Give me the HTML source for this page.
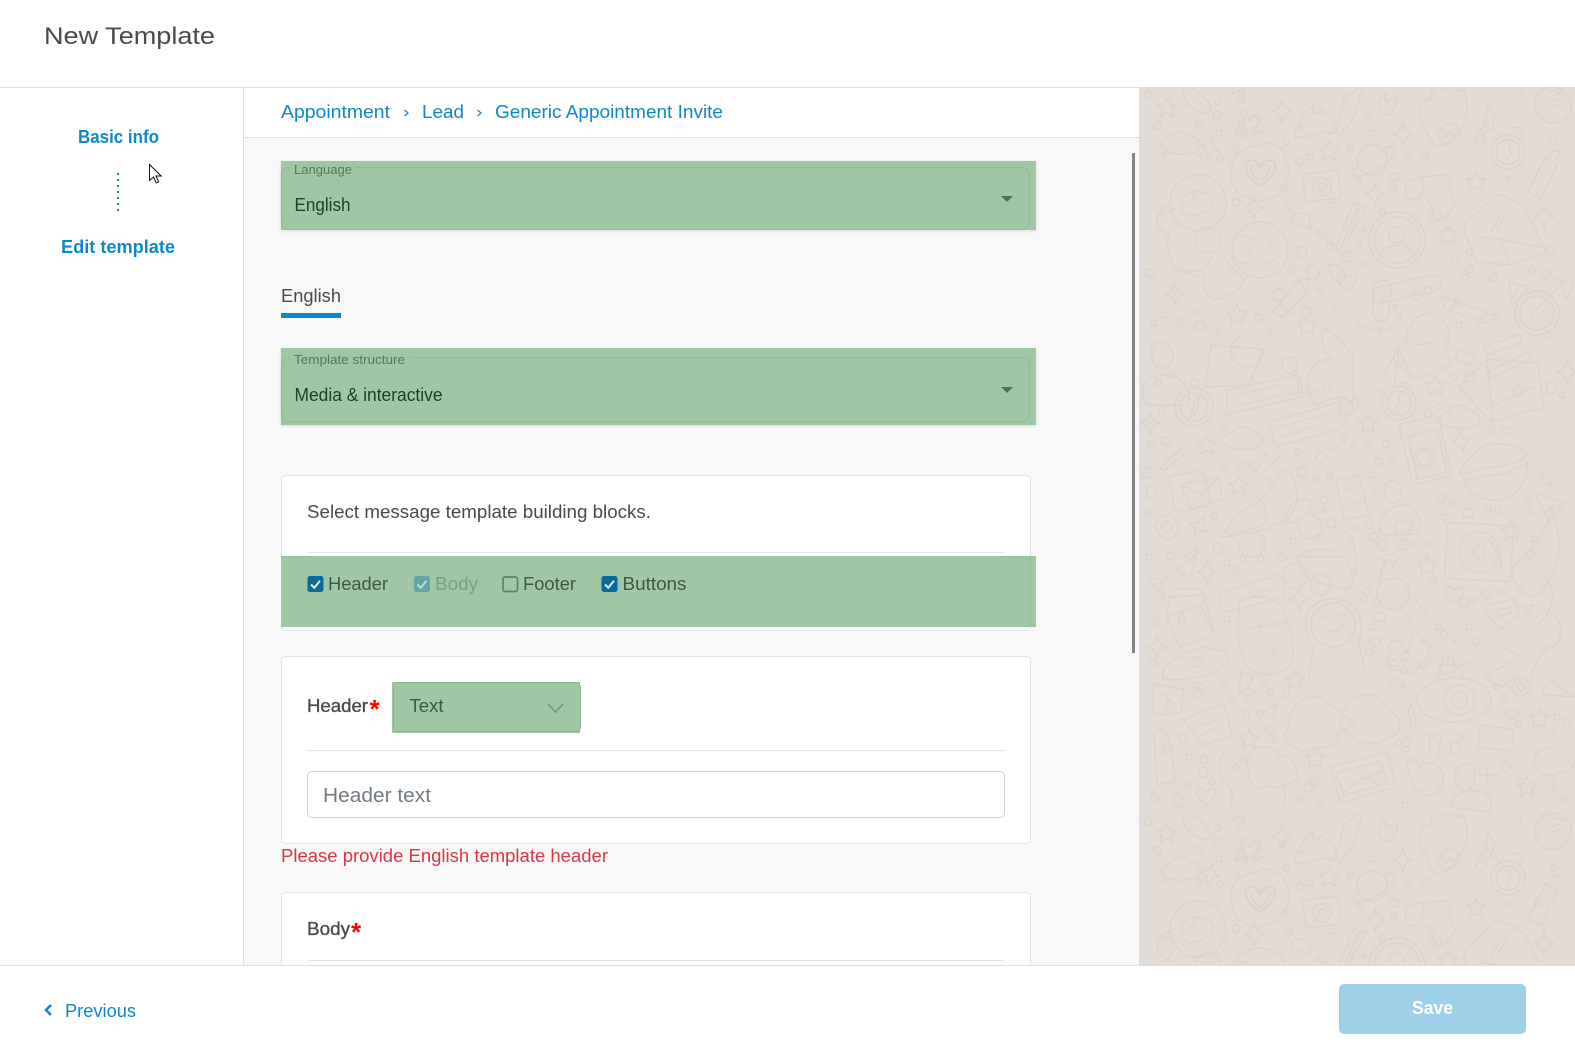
<!DOCTYPE html>
<html lang="en"><head><meta charset="utf-8"><title>New Template</title>
<style>
html,body{margin:0;padding:0;background:#fff;width:1575px;height:1052px;overflow:hidden;font-family:"Liberation Sans",sans-serif}
div{position:absolute;box-sizing:border-box}
#w{left:0;top:0;width:1575px;height:1052px;overflow:hidden}
.card{background:#fff;border:1px solid #e2e2e2;border-radius:5px;left:281px;width:750px}
.hr{background:#e2e2e2;height:1px;left:307px;width:698px}
.g{background:#a0c7a3;box-shadow:0 1px 3px rgba(0,0,0,.12)}
.ol{border:1px solid #93ba98;border-radius:8px}
svg{position:absolute;left:0;top:0}
.t{font-family:"Liberation Sans",sans-serif;font-size:18px;fill:#4a4a4a}
.b{fill:#0d88cb}.gt{fill:#3c5a43}.gd{fill:#1f4028}
.p{fill:none;stroke:#dbd4ce;stroke-width:1.4;stroke-linejoin:round;stroke-linecap:round}
</style></head><body>
<div id="w">
<div style="left:0;top:87px;width:1575px;height:1px;background:#e0e0e0"></div>
<div style="left:243px;top:88px;width:896px;height:877px;background:#f8f8f8;border-left:1px solid #e0e0e0"></div>
<div style="left:244px;top:88px;width:895px;height:50px;background:#fff;border-bottom:1px solid #e0e0e0"></div>
<div style="left:1139px;top:87px;width:436px;height:878px;background:#e3dcd6;overflow:hidden">
<svg width="436" height="878" viewBox="0 0 436 878">
<defs>
<clipPath id="c"><rect width="436" height="726"/></clipPath>
<path id="s" d="M0-10 3-3.5 10-3 5 1.5 6.5 9 0 5-6.5 9-5 1.5-10-3-3-3.5z"/>
<path id="k" d="M0-12Q1.5-2 10 0 1.5 2 0 12-1.5 2-10 0-1.5-2 0-12z"/>
<path id="h" d="M0 8C-12 0-10-8-5-8-2-8 0-5 0-4 0-5 3-8 6-8 11-8 12 0 0 8z"/>
<path id="l" d="M-17 8C-24 4-20-6-12-5-9-13 4-14 8-6 18-8 22 5 14 9 5 12-9 12-17 8z"/>
<g id="T" class="p" clip-path="url(#c)">
<use href="#s" x="28" y="21"/><use href="#k" x="71" y="61" transform="rotate(15 71 61)"/><use href="#l" x="43" y="56"/>
<path d="M45-5C55 2 70 12 72 22 70 30 60 26 50 18 44 12 42 2 45-5z"/>
<text x="94" y="48" font-family="Liberation Sans" font-size="28" transform="rotate(-14 114 40)">42</text>
<path d="M155 50C158 35 165 26 175 18 170 26 178 30 182 22L193 32C200 40 196 50 190 46 184 42 170 52 155 50zM197 45 205 12 225-4 214 32 200 50z"/>
<path d="M245 28C238 22 238 12 248 6 243 14 247 18 253 12 258 8 260 15 256 20L250 28z"/>
<use href="#s" x="190" y="64"/><use href="#s" x="99" y="-2"/><use href="#k" x="143" y="24"/><use href="#k" x="264" y="47"/>
<circle cx="233" cy="73" r="15"/><path d="M219 80C208 86 212 92 226 88 240 84 258 70 256 62 254 58 248 60 245 62"/>
<path d="M286 41C276 28 282 10 292 12 290 4 298 0 297 -5 303 4 310 6 310 -2 322 6 325 6 323 0 330 14 330 26 324 38 318 50 306 60 298 60 293 58 290 50 286 41z"/>
<path d="M299 42 C312 30 322 40 321 47 318 52 310 58 306 58 302 56 298 48 299 42zM302 42 307 51 311 44 315 50 319 41"/>
<use href="#h" transform="translate(121 86) scale(1.6)"/>
<use href="#h" transform="translate(121 86) scale(1)"/>
<path d="M121 58C128 52 134 60 140 60 146 62 146 70 148 74 152 82 150 90 147 96 144 104 140 108 134 110 126 114 116 115 106 110 98 108 95 100 93 94 90 86 92 78 96 70 102 62 110 60 121 58z"/>
<rect x="165" y="85" width="36" height="28" rx="3" transform="rotate(-7 183 100)"/><circle cx="183" cy="100" r="9"/><circle cx="183" cy="100" r="4"/>
<path d="M283 90 270 93C264 100 266 112 274 113 282 113 286 104 283 90zM283 90 305 88C312 88 314 94 308 96M310 100 316 118 306 132C296 136 290 124 294 118L286 112M300 124A6 6 0 1 0 301 125"/>
<circle cx="369" cy="65" r="17"/><circle cx="369" cy="65" r="12"/><path d="M369 56 372 66 368 72M355 44 362 50M372 42A6 4 0 0 1 382 47"/>
<path d="M390 103 407 70 418 78 402 112 392 108zM396 88C398 82 404 84 402 90 400 96 394 94 396 88zM412 66 418 62 422 68 417 72M349 20 345 40 341 42C344 46 350 46 353 40 356 34 358 30 349 20z"/>
<circle cx="414" cy="18" r="18"/><path d="M410 15 420 11M410 21 420 17M380 12 386-5 425 8 418 0"/>
<path d="M328 135 357 108C370 108 384 118 390 128L407 165 372 178 338 175 325 145zM340 150 360 152 372 178M360 152 402 160M360 130 352 145M367 126 358 142"/>
<use href="#k" x="405" y="130"/><use href="#s" x="309" y="148"/><use href="#s" x="337" y="95"/><use href="#k" x="236" y="107"/>
<circle cx="59" cy="116" r="28"/>
<path d="M44 112C50 102 70 102 74 112 76 124 66 126 58 128 48 132 40 126 44 112zM52 116 57 104M31 118C14 124 14 140 30 148M36 122 20 128M33 140C25 150 29 170 35 180 45 190 70 184 70 174L74 170M40 180C55 190 60 190 65 188 62 206 72 220 88 208 104 204 110 190 98 186L86 172"/>
<circle cx="69" cy="153" r="13"/><circle cx="69" cy="153" r="4"/>
<circle cx="121" cy="163" r="28"/><path d="M100 148 120 154M112 160 110 168M130 150 132 158M125 178 140 170M100 176 112 176"/>
<use href="#k" x="115" y="121"/>
<path d="M155 125 170 128 172 142 152 134zM180 143 197 160 215 115 220 117 200 165 177 146zM210 150 222 118 227 120 208 155"/>
<path d="M168 180C165 190 178 200 180 186 178 178 170 178 168 180zM190 178C192 190 198 200 205 192 210 180 194 176 190 178z"/>
<circle cx="258" cy="153" r="28"/><circle cx="258" cy="153" r="23"/><circle cx="258" cy="148" r="8"/><path d="M240 168C246 155 270 155 276 168"/>
<use href="#h" x="208" y="196"/>
<path d="M134 225 160 193 168 206 144 230zM140 218 154 228M160 193 170 192 168 206"/>
<use href="#k" x="36" y="207"/><use href="#s" x="98" y="228"/><use href="#s" x="168" y="238"/>
<path d="M234 202C236 190 252 190 252 202L250 226C246 238 236 238 234 226zM217 232C222 248 258 248 262 226M240 240 243 254"/>
<rect x="233" y="194" width="70" height="16" rx="8" transform="rotate(-13 268 202)"/>
<path d="M302 208 345 225 358 230 346 236 306 222zM345 224 340 238M318 208 312 224"/>
<path d="M370 195 390 200 373 218zM380 200 372 215"/>
<circle cx="398" cy="226" r="22"/><circle cx="398" cy="226" r="17"/><path d="M392 228 428 192M414 190 434 198 428 212 422 196"/>
<path d="M268 255C265 240 282 220 298 228 312 240 312 250 306 262 314 275 312 285 300 280 280 298 270 290 262 278 255 280 248 262 268 255zM276 258 292 256"/>
<path d="M345 260 378 248C384 248 384 256 376 258L348 268zM348 285 388 266C394 268 392 274 384 276L350 292zM320 262 336 268 330 278 316 272z"/>
<path d="M176 318 200 310C208 308 214 316 214 322L214 268C210 264 200 250 184 240 180 250 186 264 192 272 178 272 172 280 170 288 166 298 170 310 176 318z"/>
<path d="M245 285 260 262 272 290M260 262 255 300"/>
<path d="M72 258 66 300 110 298 124 262zM124 262A16 16 0 1 1 100 250"/><path d="M156 272A8 8 0 1 0 157 273M157 280 160 305M150 307 168 305"/>
<path d="M12 262C18 250 35 256 34 270 30 284 20 284 14 276zM4 300C6 288 30 284 40 292 52 300 52 312 48 318L8 318C4 312 2 306 4 300z"/>
<circle cx="55" cy="320" r="19"/><circle cx="55" cy="320" r="14"/><path d="M50 332 56 315 60 308 58 325zM55 300A4 4 0 1 1 56 300"/>
<path d="M88 303 158 288C162 288 164 300 162 310L98 325 86 330 88 322z"/><path d="M98 308 145 297M101 318 144 308"/>
<path d="M130 335 198 316 202 330 209 334 200 342 136 360zM140 340 190 326M142 350 175 340"/>
<circle cx="260" cy="316" r="17"/><circle cx="260" cy="316" r="12"/><path d="M259 307 261 318 254 322M240 305 246 300M262 296 272 298"/>
<path d="M320 300 348 272 399 276 405 320 352 335zM348 272 354 335M395 300 352 320M376 300A5 5 0 1 1 375 301"/>
<use href="#l" transform="translate(322 330)"/><use href="#l" x="105" y="351"/>
<use href="#s" x="296" y="299"/><use href="#s" x="229" y="336"/><use href="#s" x="67" y="358"/>
<use href="#k" x="11" y="336"/><use href="#k" x="322" y="354" transform="rotate(-15 322 354)"/><use href="#k" x="428" y="285"/>
<path d="M25 378 42 362 46 366 28 382C20 384 20 380 25 378zM28 372 42 362"/>
<rect x="268" y="332" width="40" height="62" rx="4" transform="rotate(-13 287 371)"/><rect x="274" y="346" width="30" height="44" transform="rotate(-13 287 371)"/>
<circle cx="285" cy="371" r="10"/><circle cx="285" cy="371" r="7"/>
<path d="M320 386C330 370 348 350 355 358 362 354 385 362 387 366 392 372 360 382 348 380 335 384 320 390 320 386zM324 392C335 396 345 386 358 388 368 386 386 380 388 374 390 395 378 412 358 413 340 414 328 404 324 392z"/>
<path d="M396 405 425 415 410 435zM415 418 407 425"/>
<path d="M29 390 60 383 66 390 72 418 45 424 36 422zM42 398 80 390 83 412 52 422zM42 398 62 408 80 390"/>
<use href="#s" x="100" y="399"/>
<path d="M84 450C90 430 110 420 125 410L145 382C160 388 165 420 145 435 120 445 105 448 84 450zM125 384 144 366M122 388 134 396M90 448C104 445 118 440 125 438 130 428 125 415 118 408M146 428C155 410 170 410 172 414 178 424 160 435 146 437zM160 435A12 12 0 1 0 172 428M100 455A13 13 0 1 0 122 448"/>
<path d="M197 394 220 388 230 428 206 433zM208 398C206 405 216 406 215 398M208 418 224 413"/>
<path d="M245 405C244 395 252 392 258 395 264 398 264 410 258 415 252 418 246 412 245 405zM242 448C238 430 250 418 265 418 280 420 285 436 278 447zM260 448C250 438 262 428 266 435 274 430 278 440 266 448z"/>
<rect x="307" y="437" width="66" height="56" rx="3" transform="rotate(3 340 466)"/><circle cx="340" cy="465" r="20"/><circle cx="340" cy="465" r="6"/><path d="M352 455 362 472V484"/>
<use href="#s" x="372" y="444"/>
<use href="#h" transform="translate(210 320)"/>
<circle cx="28" cy="440" r="5"/><path d="M21 430 28 427 35 430 40 440 35 450 28 453 21 450 16 440z"/>
<use href="#k" x="60" y="440" transform="rotate(25 60 440)"/><use href="#k" x="68" y="485"/><use href="#s" x="288" y="478"/><use href="#k" x="160" y="512"/>
<path d="M45 470 58 460 52 490 36 484 60 465"/><path d="M10 490 24 493 20 503 26 505 24 512 14 498z"/>
<path d="M158 470 205 470C213 478 215 490 212 500 205 505 178 496 165 488zM158 470C165 462 190 460 198 465M206 444C216 450 218 470 216 490"/>
<path d="M165 480A12 12 0 1 0 166 481M188 490A10 10 0 1 0 189 491"/>
<path d="M412 420C420 445 428 470 405 500 395 520 380 505 372 485 380 465 405 465 412 420z"/>
<path d="M240 495 245 475C250 470 255 475 254 482M265 495A16 16 0 1 0 266 496M275 510 288 528"/>
<path d="M240 470A5 5 0 1 1 240 482M250 468A5 5 0 1 1 252 476"/>
<path d="M82 505 140 488C145 490 146 502 144 510L88 525C80 525 80 510 82 505z"/>
<path d="M100 515C120 505 140 510 145 525 152 540 158 570 150 580 130 590 110 592 105 570 96 560 100 540 100 515z"/>
<path d="M115 510A10 10 0 0 1 130 505M122 535V545M105 542 150 535"/>
<path d="M30 510 65 508 75 548 40 560 28 530zM34 502 62 502 65 508M28 530 62 518 75 548M40 530C38 540 48 540 46 530L43 525z"/>
<circle cx="194" cy="538" r="22"/><path d="M172 555C160 530 170 513 194 512 220 514 225 530 220 555M184 540Q194 550 204 538M180 532Q184 526 188 532M200 530Q204 526 208 530M218 550 226 582M174 560 170 590"/>
<use href="#k" x="18" y="560"/>
<path d="M268 566 274 548C280 544 285 550 282 556 292 552 296 560 288 566 296 572 290 582 280 578 276 590 262 590 258 578 248 582 244 572 252 566 244 556 256 550 262 556zM268 566A4 4 0 1 0 269 567"/>
<path d="M346 520C362 515 370 512 376 512L380 527 362 542 350 530zM351 525 372 520M352 532 372 526M378 520 395 518 382 532"/>
<use href="#h" x="315" y="508"/>
<path d="M396 540C420 520 415 500 405 490M410 525C430 535 420 565 410 560 395 575 390 590 396 590"/>
<path d="M305 570 300 590M306 588 330 575M313 570 318 582M360 560 385 570M375 573 345 590 362 600 380 588"/>
<path d="M24 592C18 578 46 565 65 560 78 565 90 560 90 575 75 590 40 595 24 592z"/>
<path d="M15 597 45 602 42 625 28 628 15 625C12 615 14 605 15 597zM22 605 37 620M30 612 26 622"/>
<path d="M102 585 115 588 108 602 118 604 108 612 106 605 100 605z"/><use href="#s" x="156" y="593"/><path d="M124 625 138 616 134 630M124 625A3 3 0 1 1 123 624"/>
<path d="M44 632 85 617 93 648 64 658zM59 640 80 632M62 648 80 641"/>
<path d="M150 640C148 622 165 606 178 610 190 615 195 622 203 626 208 612 220 606 234 608 245 612 252 625 258 630 264 640 258 650 248 652 236 660 225 654 218 655L204 642C195 650 200 655 198 658 186 660 175 662 165 664 150 660 140 650 150 640zM203 640C196 630 212 625 210 635 214 628 222 632 208 642z"/>
<ellipse cx="315" cy="613" rx="37" ry="22" transform="rotate(-3 315 613)"/><circle cx="320" cy="613" r="15"/><circle cx="320" cy="613" r="8"/><path d="M298 590 300 578H320L325 592M308 578 310 568"/>
<path d="M272 615C276 625 275 630 277 635 278 640 270 640 272 632 268 625 270 622 272 615z"/>
<circle cx="382" cy="600" r="9"/><circle cx="382" cy="600" r="4"/><path d="M405 608C400 594 420 590 420 600 430 605 436 610 436 610M405 608 436 610"/><use href="#s" x="400" y="632"/>
<rect x="340" y="640" width="34" height="22" rx="3" transform="rotate(6 357 651)"/>
<use href="#s" x="110" y="652"/><use href="#h" x="67" y="710"/><use href="#s" x="176" y="672"/>
<path d="M15 646C22 638 30 645 33 665L36 695 18 698zM25 660C20 668 28 672 30 664z"/>
<path d="M86 662C76 680 84 695 88 698 95 700 95 720 88 726M110 685A14 14 0 0 1 140 668C155 672 160 680 158 692 150 700 135 702 130 698 120 705 110 698 110 685zM146 700 146 718"/>
<path d="M191 680 248 665 257 700 202 716zM197 686 242 674 248 696 205 708zM205 705 225 690 240 698M225 692 245 684"/>
<path d="M285 650C285 645 290 645 291 652V668M294 652C295 645 302 645 302 652L299 672M268 680C266 672 280 668 280 680 292 670 305 680 304 692 300 710 290 712 282 704 276 704 272 690 268 680z"/>
<path d="M316 690C316 678 330 672 334 680 340 692 332 705 325 705 320 703 318 698 316 690zM312 720C310 708 330 700 345 705 355 712 353 720 350 725z"/>
<path d="M348 680V695M340 688H358"/><use href="#s" x="388" y="700"/>
<path d="M415 660C405 660 395 665 395 675 395 690 415 690 420 685 430 685 436 680 436 672M415 640V650M415 690V700"/>
<path d="M14 705C10 712 14 718 18 715 22 712 16 708 14 705zM38 706C32 715 36 722 43 720 45 712 40 708 38 706z"/>
<g>
<circle cx="9" cy="8" r="4"/><circle cx="79" cy="15" r="3"/><circle cx="102" cy="12" r="3"/><circle cx="105" cy="27" r="3"/><circle cx="78" cy="28" r="4"/><circle cx="60" cy="36" r="3"/><circle cx="18" cy="38" r="4"/><circle cx="80" cy="46" r="3"/><circle cx="144" cy="32" r="3"/><circle cx="147" cy="55" r="3"/><circle cx="162" cy="40" r="2"/><circle cx="229" cy="27" r="3"/><circle cx="233" cy="46" r="3"/><circle cx="346" cy="37" r="3"/><circle cx="342" cy="52" r="5"/><circle cx="414" cy="55" r="3"/><circle cx="25" cy="68" r="2"/><circle cx="61" cy="68" r="2"/><circle cx="81" cy="71" r="3"/><circle cx="98" cy="63" r="3"/><circle cx="161" cy="74" r="4"/><circle cx="171" cy="70" r="3"/><circle cx="212" cy="62" r="3"/><circle cx="269" cy="70" r="3"/><circle cx="286" cy="68" r="3"/><circle cx="256" cy="90" r="4"/><circle cx="254" cy="102" r="3"/><circle cx="220" cy="93" r="2"/><circle cx="369" cy="92" r="2"/><circle cx="97" cy="115" r="4"/><circle cx="150" cy="120" r="3"/><circle cx="145" cy="100" r="3"/><circle cx="193" cy="118" r="3"/><circle cx="243" cy="125" r="3"/><circle cx="225" cy="143" r="2"/><circle cx="220" cy="157" r="2"/><circle cx="191" cy="160" r="3"/><circle cx="163" cy="165" r="5"/><circle cx="330" cy="165" r="3"/><circle cx="316" cy="175" r="3"/><circle cx="411" cy="164" r="5"/><circle cx="208" cy="170" r="5"/><circle cx="225" cy="178" r="2"/><circle cx="152" cy="183" r="3"/><circle cx="10" cy="186" r="4"/><circle cx="330" cy="182" r="4"/><circle cx="326" cy="190" r="3"/><circle cx="354" cy="190" r="4"/><circle cx="393" cy="183" r="3"/><circle cx="407" cy="188" r="4"/><circle cx="35" cy="202" r="3"/><circle cx="139" cy="208" r="6"/><circle cx="180" cy="203" r="2"/><circle cx="246" cy="211" r="3"/><circle cx="256" cy="220" r="2"/><circle cx="278" cy="208" r="5"/><circle cx="289" cy="204" r="4"/><circle cx="167" cy="225" r="5"/><circle cx="197" cy="218" r="2"/><circle cx="25" cy="228" r="3"/><circle cx="58" cy="225" r="2"/><circle cx="120" cy="231" r="4"/><circle cx="320" cy="217" r="3"/><circle cx="357" cy="224" r="4"/><circle cx="15" cy="236" r="3"/><circle cx="40" cy="235" r="3"/><circle cx="61" cy="238" r="5"/><circle cx="80" cy="245" r="3"/><circle cx="130" cy="245" r="3"/><circle cx="320" cy="238" r="3"/><circle cx="380" cy="233" r="3"/><circle cx="410" cy="248" r="3"/><circle cx="19" cy="295" r="3"/><circle cx="32" cy="288" r="3"/><circle cx="23" cy="323" r="3"/><circle cx="10" cy="333" r="3"/><circle cx="175" cy="306" r="3"/><circle cx="188" cy="303" r="3"/><circle cx="315" cy="290" r="3"/><circle cx="326" cy="304" r="3"/><circle cx="331" cy="290" r="5"/><circle cx="412" cy="301" r="5"/><circle cx="423" cy="308" r="3"/><circle cx="289" cy="326" r="4"/><circle cx="299" cy="320" r="3"/><circle cx="85" cy="340" r="3"/><circle cx="12" cy="358" r="3"/><circle cx="26" cy="354" r="4"/><circle cx="352" cy="343" r="3"/><circle cx="367" cy="344" r="4"/><circle cx="158" cy="365" r="3"/><circle cx="205" cy="351" r="3"/><circle cx="229" cy="358" r="3"/><circle cx="247" cy="357" r="4"/><circle cx="182" cy="370" r="5"/><circle cx="196" cy="360" r="3"/><circle cx="214" cy="359" r="2"/><circle cx="85" cy="378" r="3"/><circle cx="102" cy="378" r="3"/><circle cx="115" cy="379" r="5"/><circle cx="127" cy="367" r="2"/><circle cx="240" cy="375" r="4"/><circle cx="253" cy="373" r="3"/><circle cx="8" cy="386" r="5"/><circle cx="12" cy="405" r="5"/><circle cx="163" cy="385" r="5"/><circle cx="178" cy="392" r="3"/><circle cx="190" cy="388" r="3"/><circle cx="233" cy="388" r="3"/><circle cx="237" cy="408" r="3"/><circle cx="302" cy="412" r="4"/><circle cx="314" cy="416" r="3"/><circle cx="329" cy="426" r="5"/><circle cx="349" cy="422" r="3"/><circle cx="359" cy="423" r="3"/><circle cx="402" cy="389" r="3"/><circle cx="411" cy="397" r="2"/><circle cx="389" cy="415" r="3"/><circle cx="391" cy="424" r="2"/><circle cx="305" cy="430" r="3"/><circle cx="185" cy="413" r="4"/><circle cx="184" cy="424" r="2"/><circle cx="192" cy="436" r="5"/><circle cx="230" cy="439" r="3"/><circle cx="217" cy="441" r="2"/><circle cx="234" cy="450" r="4"/><circle cx="9" cy="426" r="3"/><circle cx="75" cy="429" r="3"/><circle cx="142" cy="449" r="3"/><circle cx="154" cy="454" r="3"/><circle cx="178" cy="451" r="3"/><circle cx="243" cy="458" r="5"/><circle cx="264" cy="458" r="5"/><circle cx="274" cy="457" r="2"/><circle cx="290" cy="457" r="2"/><circle cx="395" cy="452" r="3"/><circle cx="392" cy="468" r="4"/><circle cx="32" cy="469" r="4"/><circle cx="79" cy="461" r="5"/><circle cx="10" cy="470" r="3"/><circle cx="88" cy="476" r="3"/><circle cx="96" cy="483" r="3"/><circle cx="104" cy="471" r="3"/><circle cx="122" cy="471" r="3"/><circle cx="143" cy="470" r="4"/><circle cx="30" cy="489" r="3"/><circle cx="228" cy="505" r="4"/><circle cx="225" cy="513" r="3"/><circle cx="238" cy="515" r="3"/><circle cx="294" cy="494" r="3"/><circle cx="347" cy="507" r="5"/><circle cx="325" cy="516" r="5"/><circle cx="335" cy="514" r="2"/><circle cx="362" cy="505" r="3"/><circle cx="88" cy="532" r="3"/><circle cx="16" cy="535" r="3"/><circle cx="241" cy="530" r="5"/><circle cx="268" cy="530" r="3"/><circle cx="233" cy="540" r="3"/><circle cx="236" cy="555" r="5"/><circle cx="299" cy="540" r="3"/><circle cx="305" cy="548" r="4"/><circle cx="330" cy="540" r="3"/><circle cx="315" cy="555" r="2"/><circle cx="337" cy="554" r="4"/><circle cx="14" cy="576" r="3"/><circle cx="58" cy="575" r="5"/><circle cx="125" cy="569" r="3"/><circle cx="136" cy="565" r="3"/><circle cx="230" cy="565" r="4"/><circle cx="255" cy="578" r="5"/><circle cx="265" cy="583" r="3"/><circle cx="284" cy="578" r="4"/><circle cx="254" cy="594" r="3"/><circle cx="264" cy="598" r="2"/><circle cx="56" cy="598" r="3"/><circle cx="63" cy="600" r="3"/><circle cx="85" cy="598" r="3"/><circle cx="125" cy="595" r="3"/><circle cx="131" cy="605" r="3"/><circle cx="58" cy="607" r="4"/><circle cx="147" cy="607" r="3"/><circle cx="93" cy="615" r="3"/><circle cx="107" cy="627" r="3"/><circle cx="358" cy="600" r="3"/><circle cx="365" cy="610" r="3"/><circle cx="372" cy="627" r="5"/><circle cx="382" cy="625" r="3"/><circle cx="379" cy="637" r="3"/><circle cx="418" cy="630" r="3"/><circle cx="428" cy="635" r="3"/><circle cx="44" cy="651" r="4"/><circle cx="131" cy="644" r="4"/><circle cx="136" cy="653" r="3"/><circle cx="260" cy="656" r="3"/><circle cx="269" cy="650" r="3"/><circle cx="267" cy="662" r="3"/><circle cx="316" cy="661" r="5"/><circle cx="322" cy="650" r="2"/><circle cx="50" cy="670" r="3"/><circle cx="65" cy="673" r="4"/><circle cx="97" cy="680" r="3"/><circle cx="104" cy="673" r="3"/><circle cx="64" cy="685" r="5"/><circle cx="174" cy="695" r="4"/><circle cx="367" cy="680" r="5"/><circle cx="382" cy="695" r="3"/><circle cx="49" cy="698" r="3"/><circle cx="73" cy="695" r="3"/><circle cx="358" cy="697" r="3"/><circle cx="415" cy="705" r="3"/><circle cx="424" cy="712" r="3"/><circle cx="162" cy="712" r="3"/><circle cx="170" cy="700" r="5"/><circle cx="181" cy="715" r="3"/><circle cx="266" cy="718" r="3"/>
</g>
</g>
</defs>
<use href="#T"/>
<use href="#T" y="726"/>
</svg>
</div>
<div style="left:1132px;top:153px;width:3px;height:500px;background:#858585"></div>

<div class="g" style="left:281px;top:161px;width:755px;height:69px"></div>
<div class="ol" style="left:281px;top:167px;width:749px;height:63px"></div>
<div style="left:290px;top:165px;width:66px;height:4px;background:#a0c7a3"></div>
<div style="left:1001px;top:196px;width:0;height:0;border-left:6px solid transparent;border-right:6px solid transparent;border-top:6px solid #4f7455"></div>
<div style="left:281px;top:313px;width:60px;height:5px;background:#0d88cb"></div>
<div class="g" style="left:281px;top:348px;width:755px;height:77px"></div>
<div class="ol" style="left:281px;top:357px;width:749px;height:65px"></div>
<div style="left:290px;top:355px;width:122px;height:4px;background:#a0c7a3"></div>
<div style="left:1001px;top:387px;width:0;height:0;border-left:6px solid transparent;border-right:6px solid transparent;border-top:6px solid #4f7455"></div>
<div class="card" style="top:475px;height:156px"></div>
<div class="hr" style="top:552px"></div>
<div class="g" style="left:281px;top:556px;width:755px;height:71px;box-shadow:none"></div>
<div style="left:1030px;top:556px;width:1px;height:71px;background:#9ac19e"></div>
<div class="card" style="top:656px;height:188px"></div>
<div class="g" style="left:392px;top:682px;width:188px;height:51px;box-shadow:none"></div>
<div style="left:393px;top:682px;width:188px;height:50px;border:1px solid #8ab391;border-radius:5px"></div>
<div class="hr" style="top:750px"></div>
<div style="left:307px;top:771px;width:698px;height:47px;background:#fff;border:1px solid #ced4da;border-radius:5px"></div>
<div class="card" style="top:892px;height:73px;border-bottom:0;border-radius:5px 5px 0 0"></div>
<div class="hr" style="top:960px"></div>
<div style="left:0;top:965px;width:1575px;height:87px;background:#fff;border-top:1px solid #e0e0e0"></div>
<div style="left:1339px;top:984px;width:187px;height:50px;background:#9ecfe9;border-radius:5px"></div>

<svg width="1575" height="1052" viewBox="0 0 1575 1052">
<g class="t">
<text x="44" y="44" style="font-size:24px" textLength="171" lengthAdjust="spacingAndGlyphs">New Template</text>
<text class="b" x="281" y="118" textLength="109" lengthAdjust="spacingAndGlyphs">Appointment</text>
<text class="b" x="422" y="118" textLength="42" lengthAdjust="spacingAndGlyphs">Lead</text>
<text class="b" x="495" y="118" textLength="228" lengthAdjust="spacingAndGlyphs">Generic Appointment Invite</text>
<text class="b" x="78" y="143" font-weight="700" textLength="81" lengthAdjust="spacingAndGlyphs">Basic info</text>
<text class="b" x="61" y="253" font-weight="700" textLength="114" lengthAdjust="spacingAndGlyphs">Edit template</text>
<text style="font-size:13px;fill:#55775c" x="294" y="174" textLength="58" lengthAdjust="spacingAndGlyphs">Language</text>
<text class="gd" x="294.500" y="211" textLength="56" lengthAdjust="spacingAndGlyphs">English</text>
<text x="281" y="302" textLength="60" lengthAdjust="spacingAndGlyphs">English</text>
<text style="font-size:13px;fill:#55775c" x="294" y="364" textLength="111" lengthAdjust="spacingAndGlyphs">Template structure</text>
<text class="gd" x="294.500" y="401" textLength="148" lengthAdjust="spacingAndGlyphs">Media &amp; interactive</text>
<text x="307" y="518" textLength="344" lengthAdjust="spacingAndGlyphs">Select message template building blocks.</text>
<text class="gt" x="328" y="590" textLength="60" lengthAdjust="spacingAndGlyphs">Header</text>
<text x="435" y="590" style="font-size:18px;fill:#79a080" textLength="43" lengthAdjust="spacingAndGlyphs">Body</text>
<text class="gt" x="523" y="590" textLength="53" lengthAdjust="spacingAndGlyphs">Footer</text>
<text class="gt" x="622.500" y="590" textLength="64" lengthAdjust="spacingAndGlyphs">Buttons</text>
<text x="307" y="712" stroke="#4a4a4a" stroke-width=".35" textLength="61" lengthAdjust="spacingAndGlyphs">Header</text>
<text x="369.500" y="718" style="font-size:26px;fill:#f00" font-weight="700">*</text>
<text class="gt" x="409.500" y="712" textLength="34" lengthAdjust="spacingAndGlyphs">Text</text>
<text x="323" y="802" style="font-size:20px;fill:#727b84" textLength="108" lengthAdjust="spacingAndGlyphs">Header text</text>
<text x="281" y="862" style="font-size:18px;fill:#dc3545" textLength="327" lengthAdjust="spacingAndGlyphs">Please provide English template header</text>
<text x="307" y="935" stroke="#4a4a4a" stroke-width=".35" textLength="43" lengthAdjust="spacingAndGlyphs">Body</text>
<text x="351" y="941" style="font-size:26px;fill:#f00" font-weight="700">*</text>
<text class="b" x="65" y="1017" textLength="71" lengthAdjust="spacingAndGlyphs">Previous</text>
<text x="1412" y="1014" font-weight="700" style="font-size:18px;fill:#fff" textLength="41" lengthAdjust="spacingAndGlyphs">Save</text>
</g>
<path d="M404.500 110 408 113 404.500 116M477.500 110 481 113 477.500 116" fill="none" stroke="#0d88cb" stroke-width="1.200"/>
<path d="M118 173V211" stroke="#0d88cb" stroke-width="2" stroke-dasharray="2 4"/>
<path d="M149.500 164.500V180.500L153.500 177 156.200 183 158.700 181.900 156 176H161.200z" fill="#fff" stroke="#111" stroke-width="1"/>
<rect x="307.500" y="576" width="16" height="16" rx="2.500" fill="#0b6a9b"/><path d="M311 584.500 314.300 587.800 320 580.800" fill="none" stroke="#dcefe6" stroke-width="2"/>
<rect x="414" y="576" width="16" height="16" rx="2.500" fill="#64a5a8"/><path d="M417.500 584.500 420.800 587.800 426.500 580.800" fill="none" stroke="#b9dcd0" stroke-width="2"/>
<rect x="503" y="577" width="14.500" height="14.500" rx="2" fill="none" stroke="#5e8468" stroke-width="1.700"/>
<rect x="601.500" y="576" width="16" height="16" rx="2.500" fill="#0b6a9b"/><path d="M605 584.500 608.300 587.800 614 580.800" fill="none" stroke="#dcefe6" stroke-width="2"/>
<path d="M548 704 555.500 712 563 704" fill="none" stroke="#6f9677" stroke-width="1.500"/>
<path d="M51 1005 46 1010 51 1015" fill="none" stroke="#0d88cb" stroke-width="2.500"/>
</svg>
</div>
</body></html>
